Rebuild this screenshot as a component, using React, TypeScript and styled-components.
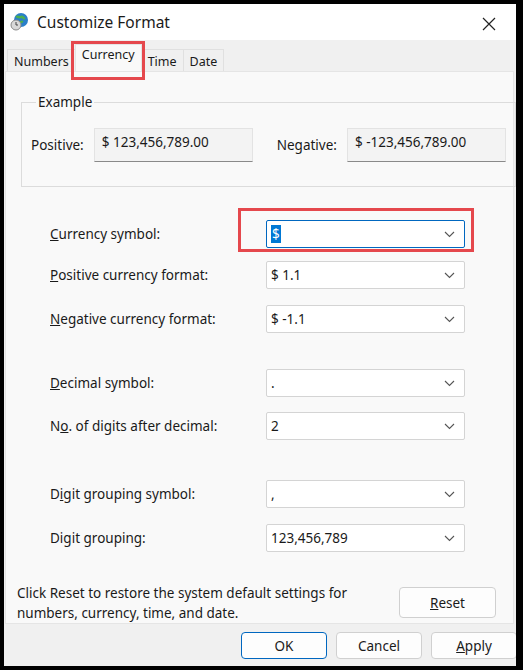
import React from "react";
import styled, { createGlobalStyle } from "styled-components";

const G = createGlobalStyle`
  html, body { margin: 0; padding: 0; background: #000; }
  body { font-family: "Noto Sans", "Segoe UI", sans-serif; color: #1a1a1a; }
`;
const Win = styled.div`
  width: 512px; height: 662px; margin: 4px 0 0 4px; background: #f0f0f0;
  display: flex; flex-direction: column; overflow: hidden;
`;
const Title = styled.div`
  height: 36px; background: #fff; display: flex; align-items: center; padding-left: 6px; gap: 7px;
  font-size: 15.5px; position: relative;
`;
const Close = styled.div`
  position: absolute; right: 20px; top: 10px; width: 14px; height: 14px;
`;
const Tabs = styled.div`display: flex; margin: 10px 0 0 3px; height: 21px; align-items: flex-end;`;
const Tab = styled.div<{ $active?: boolean }>`
  font-size: 12.5px; padding: 0 6px; height: ${p => p.$active ? "26px" : "21px"};
  line-height: ${p => p.$active ? "20px" : "23px"};
  background: ${p => p.$active ? "#f9f9f9" : "#f0f0f0"};
  border: 1px solid ${p => p.$active ? "#e5e5e5" : "#e0e0e0"}; border-bottom: none;
  margin-right: -1px; position: relative; z-index: ${p => p.$active ? 2 : 1};
  ${p => p.$active ? `&::after { content: ""; position: absolute; left: -5px; right: -4px; top: -4px; bottom: -9px; border: 3px solid #e5484d; }` : ""}
`;
const Panel = styled.div`
  margin: 0 0 0 1px; width: 509px; height: 553px; background: #f9f9f9; border: 1px solid #e5e5e5;
  box-sizing: border-box; padding: 21px 13px 0 15px; display: flex; flex-direction: column;
`;
const Group = styled.fieldset`
  margin: 0; border: 1px solid #dcdcdc; height: 96px; box-sizing: border-box; padding: 0 9px 6px 9px;
  display: flex; align-items: center; gap: 10px; font-size: 13.5px;
`;
const Legend = styled.legend`font-size: 13.5px; padding: 0 2px; margin-left: 5px;`;
const ExBox = styled.div`
  width: 159px; height: 34px; box-sizing: border-box; background: #f3f3f3; border: 1px solid #e3e3e3;
  border-bottom: 1px solid #8a8a8a; padding: 4px 7px; font-size: 13.5px;
`;
const Spacer = styled.div`width: 4px;`;
const Row = styled.div<{ $mt: number }>`
  display: flex; align-items: center; margin-top: ${p => p.$mt}px; padding-left: 29px; font-size: 13.5px;
`;
const Label = styled.div`width: 216px;`;
const Sel = styled.div<{ $focus?: boolean }>`
  width: 199px; height: 28px; box-sizing: border-box; background: #fff; position: relative;
  border: 1px solid ${p => p.$focus ? "#0067c0" : "#d4d4d4"}; border-radius: 2px;
  display: flex; align-items: center; padding-left: 4px; font-size: 13.5px;
  ${p => p.$focus ? `&::after { content: ""; position: absolute; left: -29px; right: -10px; top: -13px; bottom: -5px; border: 3px solid #e5484d; }` : ""}
`;
const Hi = styled.span`background: #0078d4; color: #fff; padding: 0 1px;`;
const Chev = styled.svg`position: absolute; right: 9px; top: 10px;`;
const Foot = styled.div`display: flex; margin-top: 31px; font-size: 13.5px; line-height: 20px; align-items: flex-start;`;
const FootText = styled.div`width: 382px; margin-left: -4px;`;
const Btn = styled.div<{ $primary?: boolean; $w?: number }>`
  width: ${p => p.$w ?? 86}px; height: 27px; box-sizing: border-box; background: #fdfdfd;
  border: 1px solid ${p => p.$primary ? "#0067c0" : "#d0d0d0"}; border-radius: 4px;
  display: flex; align-items: center; justify-content: center; font-size: 13.5px;
`;
const ResetBtn = styled(Btn)`height: 31px; margin-top: 4px;`;
const Bottom = styled.div`display: flex; gap: 9px; justify-content: flex-end; padding: 8px 0 0 0; margin-right: -1px;`;
const U = styled.span`text-decoration: underline;`;

const Chevron = () => (
  <Chev width="11" height="7" viewBox="0 0 11 7"><path d="M1 1l4.5 4.5L10 1" fill="none" stroke="#555" strokeWidth="1.1" /></Chev>
);

const rows: [React.ReactNode, React.ReactNode, number, boolean?][] = [
  [<><U>C</U>urrency symbol:</>, <Hi>$</Hi>, 0, true],
  [<><U>P</U>ositive currency format:</>, "$ 1.1", 13],
  [<><U>N</U>egative currency format:</>, "$ -1.1", 16],
  [<><U>D</U>ecimal symbol:</>, ".", 36],
  [<>N<U>o</U>. of digits after decimal:</>, "2", 15],
  [<>D<U>i</U>git grouping symbol:</>, ",", 40],
  [<>Di<U>g</U>it grouping:</>, "123,456,789", 16],
];

export default function App() {
  return (
    <Win>
      <G />
      <Title>
        <svg width="20" height="20" viewBox="0 0 20 20">
          <circle cx="11" cy="8" r="7" fill="#2a7fc9" />
          <path d="M6 5c2-1 3 1 5 0s2 2 4 1M8 11c2 0 3-2 5-1" stroke="#4caf50" strokeWidth="2.5" fill="none" />
          <circle cx="6" cy="13" r="5" fill="#d8d8d8" stroke="#888" />
          <path d="M6 10v3h2" stroke="#444" fill="none" />
        </svg>
        Customize Format
        <Close><svg width="14" height="14" viewBox="0 0 14 14"><path d="M1 1l12 12M13 1L1 13" stroke="#222" strokeWidth="1.2" /></svg></Close>
      </Title>
      <Tabs>
        <Tab>Numbers</Tab>
        <Tab $active>Currency</Tab>
        <Tab>Time</Tab>
        <Tab>Date</Tab>
      </Tabs>
      <Panel>
        <Group>
          <Legend>Example</Legend>
          <span>Positive:</span><ExBox>$ 123,456,789.00</ExBox><Spacer />
          <span>Negative:</span><ExBox>$ -123,456,789.00</ExBox>
        </Group>
        <div style={{ height: 34 }} />
        {rows.map(([l, v, mt, f], i) => (
          <Row key={i} $mt={mt}>
            <Label>{l}</Label>
            <Sel $focus={f}>{v}<Chevron /></Sel>
          </Row>
        ))}
        <Foot>
          <FootText>Click Reset to restore the system default settings for numbers, currency, time, and date.</FootText>
          <ResetBtn $w={97}><U>R</U>eset</ResetBtn>
        </Foot>
      </Panel>
      <Bottom>
        <Btn $primary>OK</Btn>
        <Btn>Cancel</Btn>
        <Btn><U>A</U>pply</Btn>
      </Bottom>
    </Win>
  );
}
